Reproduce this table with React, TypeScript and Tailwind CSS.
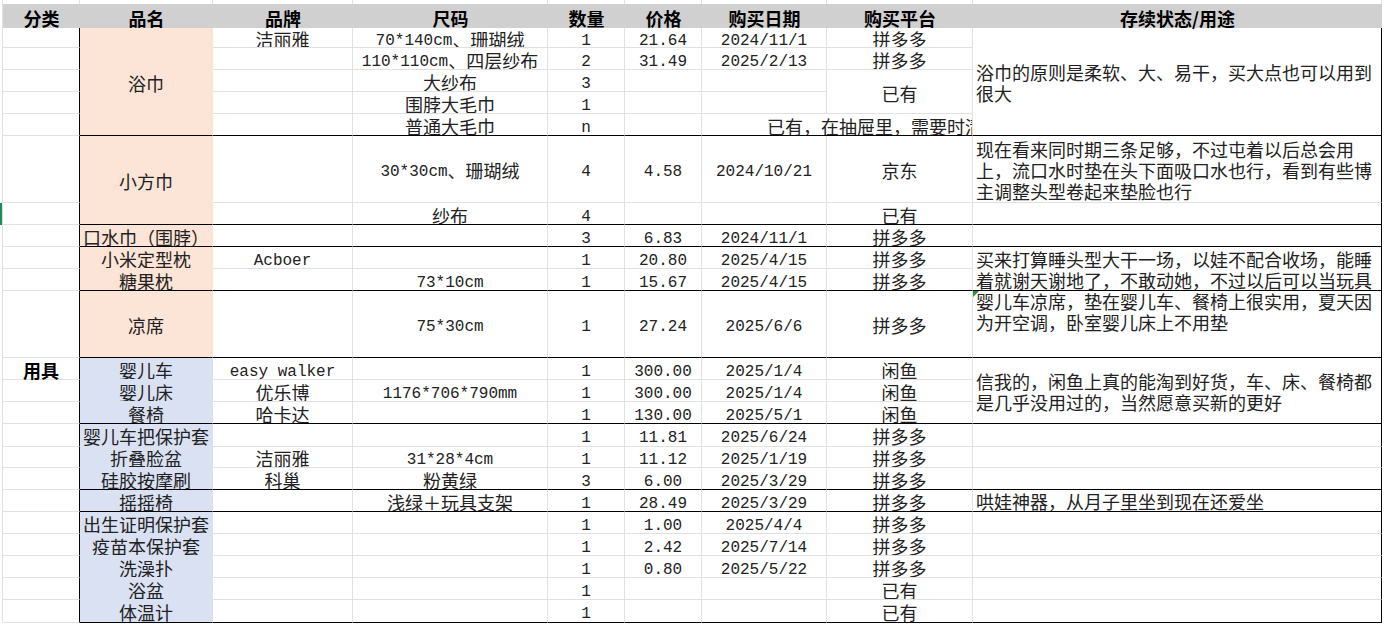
import type { ReactNode } from "react";

type Entry =
  | null
  | string
  | { t?: string; s?: string; c?: string; end?: boolean; top?: boolean; mark?: boolean };

type Row = { bg: string; end?: boolean; cat?: string; bar?: boolean; cells: Entry[] };

const PEACH = "bg-[#fce4d6]";
const BLUE = "bg-[#d9e1f2]";

const headers = ["分类", "品名", "品牌", "尺码", "数量", "价格", "购买日期", "购买平台", "存续状态/用途"];

const rows: Row[] = [
  {
    bg: PEACH,
    cells: [
      { t: "浴巾", s: "row-span-5", end: true },
      "洁丽雅",
      "70*140cm、珊瑚绒",
      "1",
      "21.64",
      "2024/11/1",
      "拼多多",
      { t: "浴巾的原则是柔软、大、易干，买大点也可以用到\n很大", s: "row-span-5", end: true },
    ],
  },
  { bg: PEACH, cells: [null, "", "110*110cm、四层纱布", "2", "31.49", "2025/2/13", "拼多多", null] },
  { bg: PEACH, cells: [null, "", "大纱布", "3", "", "", { t: "已有", s: "row-span-2" }, null] },
  { bg: PEACH, cells: [null, "", "围脖大毛巾", "1", "", "", null, null] },
  {
    bg: PEACH,
    end: true,
    cells: [
      null,
      "",
      "普通大毛巾",
      "n",
      "",
      { t: "已有，在抽屉里，需要时清洗使用", s: "col-span-2", c: "justify-start pl-[65px]" },
      null,
      null,
    ],
  },
  {
    bg: PEACH,
    cells: [
      { t: "小方巾", s: "row-span-2", end: true },
      "",
      "30*30cm、珊瑚绒",
      "4",
      "4.58",
      "2024/10/21",
      "京东",
      { t: "现在看来同时期三条足够，不过屯着以后总会用\n上，流口水时垫在头下面吸口水也行，看到有些博\n主调整头型卷起来垫脸也行" },
    ],
  },
  { bg: PEACH, end: true, bar: true, cells: [null, "", "纱布", "4", "", "", "已有", ""] },
  { bg: PEACH, end: true, cells: ["口水巾（围脖）", "", "", "3", "6.83", "2024/11/1", "拼多多", ""] },
  {
    bg: PEACH,
    cells: [
      "小米定型枕",
      "Acboer",
      "",
      "1",
      "20.80",
      "2025/4/15",
      "拼多多",
      {
        t: "买来打算睡头型大干一场，以娃不配合收场，能睡\n着就谢天谢地了，不敢动她，不过以后可以当玩具",
        s: "row-span-2",
        end: true,
      },
    ],
  },
  { bg: PEACH, end: true, cells: ["糖果枕", "", "73*10cm", "1", "15.67", "2025/4/15", "拼多多", null] },
  {
    bg: PEACH,
    end: true,
    cells: [
      "凉席",
      "",
      "75*30cm",
      "1",
      "27.24",
      "2025/6/6",
      "拼多多",
      { t: "婴儿车凉席，垫在婴儿车、餐椅上很实用，夏天因\n为开空调，卧室婴儿床上不用垫", top: true, mark: true },
    ],
  },
  {
    bg: BLUE,
    cat: "用具",
    cells: [
      "婴儿车",
      "easy walker",
      "",
      "1",
      "300.00",
      "2025/1/4",
      "闲鱼",
      {
        t: "信我的，闲鱼上真的能淘到好货，车、床、餐椅都\n是几乎没用过的，当然愿意买新的更好",
        s: "row-span-3",
        end: true,
      },
    ],
  },
  { bg: BLUE, cells: ["婴儿床", "优乐博", "1176*706*790mm", "1", "300.00", "2025/1/4", "闲鱼", null] },
  { bg: BLUE, end: true, cells: ["餐椅", "哈卡达", "", "1", "130.00", "2025/5/1", "闲鱼", null] },
  { bg: BLUE, cells: ["婴儿车把保护套", "", "", "1", "11.81", "2025/6/24", "拼多多", ""] },
  { bg: BLUE, cells: ["折叠脸盆", "洁丽雅", "31*28*4cm", "1", "11.12", "2025/1/19", "拼多多", ""] },
  { bg: BLUE, end: true, cells: ["硅胶按摩刷", "科巢", "粉黄绿", "3", "6.00", "2025/3/29", "拼多多", ""] },
  {
    bg: BLUE,
    end: true,
    cells: ["摇摇椅", "", "浅绿＋玩具支架", "1", "28.49", "2025/3/29", "拼多多", "哄娃神器，从月子里坐到现在还爱坐"],
  },
  { bg: BLUE, cells: ["出生证明保护套", "", "", "1", "1.00", "2025/4/4", "拼多多", ""] },
  { bg: BLUE, cells: ["疫苗本保护套", "", "", "1", "2.42", "2025/7/14", "拼多多", ""] },
  { bg: BLUE, cells: ["洗澡扑", "", "", "1", "0.80", "2025/5/22", "拼多多", ""] },
  { bg: BLUE, cells: ["浴盆", "", "", "1", "", "", "已有", ""] },
  { bg: BLUE, end: true, cells: ["体温计", "", "", "1", "", "", "已有", ""] },
];

// latin runs use a half-width mono face, like SimSun does
function Txt({ s }: { s: string }) {
  const parts = s.split(/([\x20-\x7e]+)/).filter(Boolean);
  return (
    <>
      {parts.map((p, i) =>
        /^[\x20-\x7e]+$/.test(p) ? (
          <span key={i} className="relative top-[2px] font-['Liberation_Mono',monospace] text-[16px]">
            {p}
          </span>
        ) : (
          <span key={i}>{p}</span>
        )
      )}
    </>
  );
}

const GRID = "border-r border-b border-[#e1e1e1]";

export default function App() {
  const cells: ReactNode[] = [];

  // thin strip above the header
  for (let i = 0; i < 11; i++) {
    cells.push(<div key={`top-${i}`} className={i < 10 ? "border-r border-[#e1e1e1]" : ""} />);
  }

  // header row
  cells.push(<div key="h-0" className="border-r border-[#e1e1e1]" />);
  headers.forEach((h) => {
    cells.push(
      <div
        key={`h-${h}`}
        className="flex items-center justify-center bg-[#d0d0d0] pt-[3px] text-[18px] font-bold leading-[18px] text-black"
      >
        {h}
      </div>
    );
  });
  cells.push(<div key="h-end" />);

  rows.forEach((row, ri) => {
    cells.push(
      <div key={`${ri}-s`} className={`border-r border-[#e1e1e1] ${row.bar ? "bg-[#1e8c5a]" : ""}`} />
    );
    cells.push(
      <div
        key={`${ri}-cat`}
        className="flex items-center justify-center border-r border-b border-[#e1e1e1] border-r-black pt-[2px] font-bold leading-[16px] text-black"
      >
        {row.cat}
      </div>
    );

    row.cells.forEach((entry, ci) => {
      if (entry === null) return;
      const e = typeof entry === "string" ? { t: entry } : entry;
      const end = e.end ?? row.end;
      const isName = ci === 0;
      const isNote = ci === 7;

      let cls = `${GRID} relative flex overflow-hidden`;
      if (isName) cls += ` ${row.bg} border-r-transparent`;
      if (isNote) cls += " border-r-black";
      if (end) cls += " border-b-black";
      else if (isName) cls += " border-b-transparent";
      if (e.s) cls += ` ${e.s}`;

      if (isNote) {
        cls += e.top
          ? " items-start justify-start pl-[3px] whitespace-pre leading-[21px]"
          : " items-center justify-start pl-[3px] pt-[2px] whitespace-pre leading-[21px]";
      } else {
        cls += ` items-center whitespace-nowrap pt-[2px] leading-[16px] ${e.c ?? "justify-center"}`;
      }

      cells.push(
        <div key={`${ri}-${ci}`} className={cls}>
          {e.mark && (
            <span className="absolute left-0 top-0 h-0 w-0 border-t-[6px] border-r-[6px] border-t-[#2f8a3c] border-r-transparent" />
          )}
          {e.t ? <Txt s={e.t} /> : null}
        </div>
      );
    });

    cells.push(<div key={`${ri}-end`} />);
  });

  return (
    <div className="h-[624px] w-[1386px] overflow-hidden bg-white font-['Noto_Sans_CJK_SC',sans-serif] text-[18px] text-[#222]">
      <div className="grid grid-cols-[3px_77px_133px_140px_195px_77px_77px_125px_146px_409px_1fr] grid-rows-[4px_24px_20px_22px_22px_22px_22px_67px_22px_22px_22px_22px_67px_22px_22px_22px_23px_21px_22px_22px_22px_22px_22px_22px_23px]">
        {cells}
      </div>
    </div>
  );
}
